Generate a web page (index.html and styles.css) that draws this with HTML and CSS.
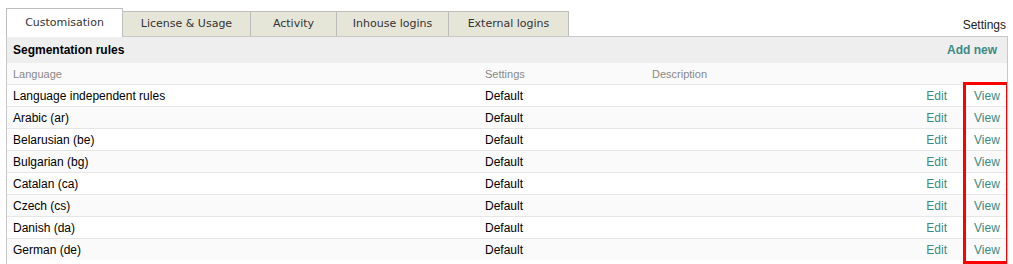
FILE: index.html
```html
<!DOCTYPE html>
<html lang="en">

<head>
    <meta charset="UTF-8">
    <title>Customisation</title>
    <link rel="stylesheet" href="styles.css">
</head>

<body>
    <div class="page">
        <div class="tab-bar">
            <ul class="tabs">
                <li class="tab active">Customisation</li>
                <li class="tab">License &amp; Usage</li>
                <li class="tab">Activity</li>
                <li class="tab">Inhouse logins</li>
                <li class="tab">External logins</li>
            </ul>
            <span class="tab-settings">Settings</span>
        </div>

        <div class="panel">
            <div class="panel-header">
                <span class="panel-title">Segmentation rules</span>
                <a href="#" class="add-new">Add new</a>
            </div>
            <table class="rules">
                <colgroup>
                    <col class="col-lang">
                    <col class="col-settings">
                    <col class="col-desc">
                    <col class="col-edit">
                    <col class="col-view">
                </colgroup>
                <thead>
                    <tr>
                        <th>Language</th>
                        <th>Settings</th>
                        <th>Description</th>
                        <th></th>
                        <th></th>
                    </tr>
                </thead>
                <tbody>
                    <tr><td>Language independent rules</td><td>Default</td><td></td><td class="edit"><a href="#">Edit</a></td><td class="view"><a href="#">View</a></td></tr>
                    <tr><td>Arabic (ar)</td><td>Default</td><td></td><td class="edit"><a href="#">Edit</a></td><td class="view"><a href="#">View</a></td></tr>
                    <tr><td>Belarusian (be)</td><td>Default</td><td></td><td class="edit"><a href="#">Edit</a></td><td class="view"><a href="#">View</a></td></tr>
                    <tr><td>Bulgarian (bg)</td><td>Default</td><td></td><td class="edit"><a href="#">Edit</a></td><td class="view"><a href="#">View</a></td></tr>
                    <tr><td>Catalan (ca)</td><td>Default</td><td></td><td class="edit"><a href="#">Edit</a></td><td class="view"><a href="#">View</a></td></tr>
                    <tr><td>Czech (cs)</td><td>Default</td><td></td><td class="edit"><a href="#">Edit</a></td><td class="view"><a href="#">View</a></td></tr>
                    <tr><td>Danish (da)</td><td>Default</td><td></td><td class="edit"><a href="#">Edit</a></td><td class="view"><a href="#">View</a></td></tr>
                    <tr><td>German (de)</td><td>Default</td><td></td><td class="edit"><a href="#">Edit</a></td><td class="view"><a href="#">View</a></td></tr>
                </tbody>
            </table>
            <div class="highlight"></div>
        </div>
    </div>
</body>

</html>
```

FILE: styles.css
```css
body {
    margin: 0;
    background-color: #fff;
    font-family: "Liberation Sans", Arial, sans-serif;
    font-size: 12px;
    color: #000;
}

.page {
    padding: 8px 5px 0 6px;
}

.tab-bar {
    display: flex;
    align-items: flex-end;
    justify-content: space-between;
    height: 28px;
}

.tabs {
    display: flex;
    align-items: flex-end;
    list-style: none;
    margin: 0;
    padding: 0;
    height: 28px;
}

.tab {
    box-sizing: border-box;
    height: 26px;
    line-height: 24px;
    text-align: center;
    font-family: "DejaVu Sans", Verdana, sans-serif;
    font-size: 11px;
    color: #333;
    background-color: #e6e6d8;
    border: 1px solid #bdbdbd;
    border-bottom: none;
    margin-right: -1px;
    position: relative;
    top: 1px;
}

.tab:nth-child(1) { width: 117px; }
.tab:nth-child(2) { width: 129px; }
.tab:nth-child(3) { width: 87px; }
.tab:nth-child(4) { width: 113px; }
.tab:nth-child(5) { width: 121px; }

.tab.active {
    height: 29px;
    line-height: 28px;
    background-color: #fff;
    z-index: 1;
}

.tab-settings {
    font-size: 12px;
    color: #222;
    padding-right: 2px;
    margin-bottom: 4px;
}

.panel {
    position: relative;
    border: 1px solid #c8c8c8;
    border-bottom: none;
    height: 227px;
    overflow: hidden;
}

.panel-header {
    display: flex;
    justify-content: space-between;
    align-items: center;
    height: 26px;
    padding: 0 10px 0 6px;
    background-color: #eee;
}

.panel-title {
    font-weight: bold;
    font-size: 12px;
}

.add-new {
    font-weight: bold;
    color: #3c8a84;
    text-decoration: none;
}

.rules {
    width: 100%;
    border-collapse: collapse;
    table-layout: fixed;
}

.col-lang { width: 472px; }
.col-settings { width: 167px; }
.col-desc { width: auto; }
.col-edit { width: 100px; }
.col-view { width: 60px; }

.rules th {
    height: 21px;
    text-align: left;
    font-weight: normal;
    font-size: 11px;
    color: #888;
    background-color: #fafafa;
    padding: 0 6px;
}

.rules td {
    height: 21px;
    padding: 0 6px;
    border-top: 1px solid #e6e6e6;
    white-space: nowrap;
}

.rules tbody tr:nth-child(even) td {
    background-color: #fafafa;
}

.rules a {
    color: #3c8a84;
    text-decoration: none;
}

.rules td.edit {
    text-align: right;
    padding-right: 0;
}

.rules td.view {
    padding-left: 27px;
}

.highlight {
    position: absolute;
    left: 956px;
    top: 45px;
    width: 40px;
    height: 176px;
    border: 3px solid #f00;
    pointer-events: none;
}
```
